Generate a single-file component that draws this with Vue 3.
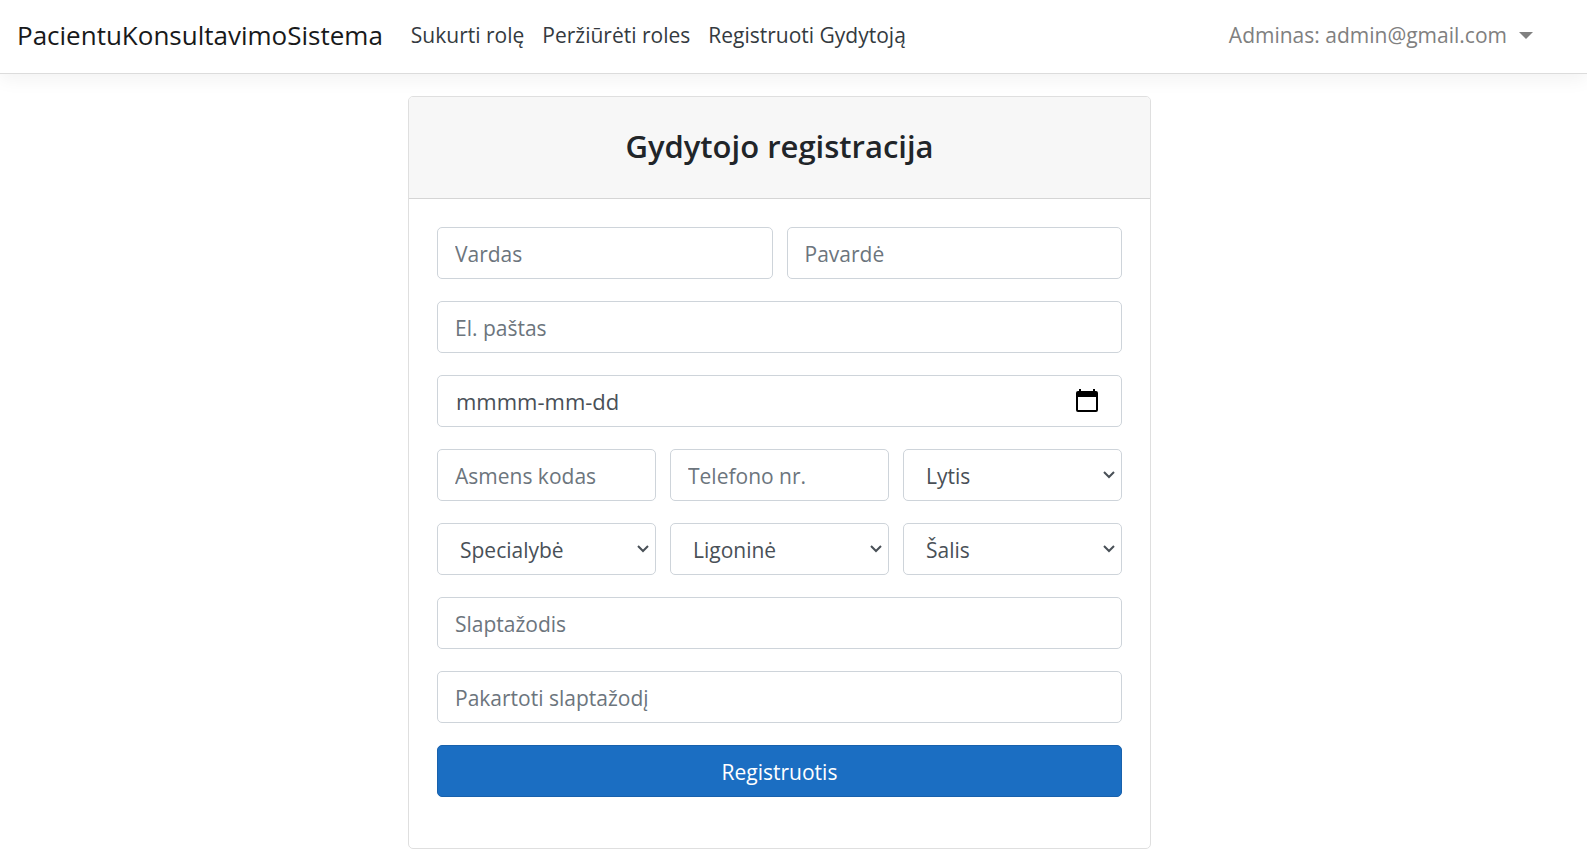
<script setup>
import { ref } from 'vue'

const links = ['Sukurti rolę', 'Peržiūrėti roles', 'Registruoti Gydytoją']

const rows = [
  [
    { name: 'vardas', label: 'Vardas', kind: 'text' },
    { name: 'pavarde', label: 'Pavardė', kind: 'text' }
  ],
  [{ name: 'pastas', label: 'El. paštas', kind: 'email' }],
  [{ name: 'data', label: 'mmmm-mm-dd', kind: 'date' }],
  [
    { name: 'kodas', label: 'Asmens kodas', kind: 'text' },
    { name: 'telefonas', label: 'Telefono nr.', kind: 'tel' },
    { name: 'lytis', label: 'Lytis', kind: 'select' }
  ],
  [
    { name: 'specialybe', label: 'Specialybė', kind: 'select' },
    { name: 'ligonine', label: 'Ligoninė', kind: 'select' },
    { name: 'salis', label: 'Šalis', kind: 'select' }
  ],
  [{ name: 'slaptazodis', label: 'Slaptažodis', kind: 'password' }],
  [{ name: 'pakartoti', label: 'Pakartoti slaptažodį', kind: 'password' }]
]

const values = ref({})
</script>

<template>
  <div class="page">
    <header class="navbar">
      <a class="brand" href="#">PacientuKonsultavimoSistema</a>
      <nav class="links">
        <a v-for="link in links" :key="link" href="#">{{ link }}</a>
      </nav>
      <button class="account" type="button">
        Adminas: admin@gmail.com
        <svg class="caret" viewBox="0 0 14 7" aria-hidden="true"><path d="M0 0h14L7 7z" /></svg>
      </button>
    </header>

    <main class="content">
      <section class="card">
        <div class="card-header">
          <h1>Gydytojo registracija</h1>
        </div>
        <form class="form" @submit.prevent>
          <div v-for="(row, i) in rows" :key="i" class="row">
            <div v-for="field in row" :key="field.name" class="field">
              <template v-if="field.kind === 'select'">
                <select v-model="values[field.name]" class="control select" :aria-label="field.label">
                  <option :value="undefined">{{ field.label }}</option>
                </select>
                <svg class="chevron" viewBox="0 0 12 8" aria-hidden="true"><path d="M1 1l5 5 5-5" /></svg>
              </template>
              <template v-else-if="field.kind === 'date'">
                <input v-model="values[field.name]" class="control date" type="text" :placeholder="field.label" :aria-label="field.label">
                <button class="calendar" type="button" aria-label="Kalendorius">
                  <svg viewBox="0 0 22 24" aria-hidden="true">
                    <path fill-rule="evenodd" d="M3 0h2v2h12V0h2v2h1a2 2 0 0 1 2 2v17a2 2 0 0 1-2 2H2a2 2 0 0 1-2-2V4a2 2 0 0 1 2-2h1zM2 8v13h18V8z" />
                  </svg>
                </button>
              </template>
              <input v-else v-model="values[field.name]" class="control" :type="field.kind" :placeholder="field.label" :aria-label="field.label">
            </div>
          </div>
          <button class="submit" type="submit">Registruotis</button>
        </form>
      </section>
    </main>
  </div>
</template>

<style>
body {
  margin: 0;
  background: #fff;
}
</style>

<style scoped>
.page,
.page * {
  box-sizing: border-box;
}

.page {
  font-family: "Segoe UI", "Open Sans", "Noto Sans", sans-serif;
  font-size: 21px;
  line-height: 32px;
  color: #212529;
}

.navbar {
  display: flex;
  align-items: center;
  min-height: 74px;
  padding: 0 54px 3px 17px;
  border-bottom: 1px solid #dcdcdc;
  box-shadow: 0 6px 17px rgba(0, 0, 0, 0.05);
}

.brand {
  margin-right: 28px;
  font-size: 26px;
  color: #18191a;
  text-decoration: none;
}

.links {
  display: flex;
  gap: 18px;
}

.links a {
  color: #343a40;
  text-decoration: none;
}

.account {
  display: flex;
  align-items: center;
  gap: 12px;
  margin-left: auto;
  padding: 0;
  border: 0;
  background: none;
  font: inherit;
  color: #808080;
}

.caret {
  width: 14px;
  height: 7px;
  fill: #808080;
}

.content {
  display: flex;
  justify-content: center;
  padding: 22px 28px 0 0;
}

.card {
  width: 100%;
  max-width: 743px;
  border: 1px solid #dfdfdf;
  border-radius: 5px;
  background: #fff;
}

.card-header {
  padding: 29px 28px 32px;
  border-bottom: 1px solid #d5d5d5;
  border-radius: 4px 4px 0 0;
  background: #f7f7f7;
}

h1 {
  margin: 0;
  font-size: 31px;
  font-weight: 600;
  line-height: 40px;
  text-align: center;
}

.form {
  display: flex;
  flex-direction: column;
  gap: 22px;
  padding: 28px 28px 51px;
}

.row {
  display: flex;
  gap: 14px;
}

.field {
  position: relative;
  flex: 1 1 0;
  min-width: 0;
}

.control {
  display: block;
  width: 100%;
  height: 52px;
  margin: 0;
  padding: 2px 17px 0;
  border: 1px solid #ced4da;
  border-radius: 5px;
  background: #fff;
  font: inherit;
  color: #495057;
}

.control::placeholder {
  color: #6c757d;
  opacity: 1;
}

.date::placeholder {
  color: #495057;
}

.date {
  padding: 0 60px 0 18px;
  font-size: 22px;
}

.select {
  appearance: none;
  padding: 2px 28px 0 22px;
}

.chevron {
  position: absolute;
  top: 22px;
  right: 7px;
  width: 12px;
  height: 8px;
  fill: none;
  stroke: #495057;
  stroke-width: 2;
  pointer-events: none;
}

.calendar {
  position: absolute;
  top: 14px;
  right: 24px;
  width: 22px;
  height: 24px;
  padding: 0;
  border: 0;
  background: none;
}

.calendar svg {
  display: block;
  width: 22px;
  height: 24px;
}

.submit {
  height: 52px;
  padding: 2px 0 0;
  border: 1px solid #1861ac;
  border-radius: 5px;
  background: #1b6ec2;
  font: inherit;
  color: #fff;
}
</style>
